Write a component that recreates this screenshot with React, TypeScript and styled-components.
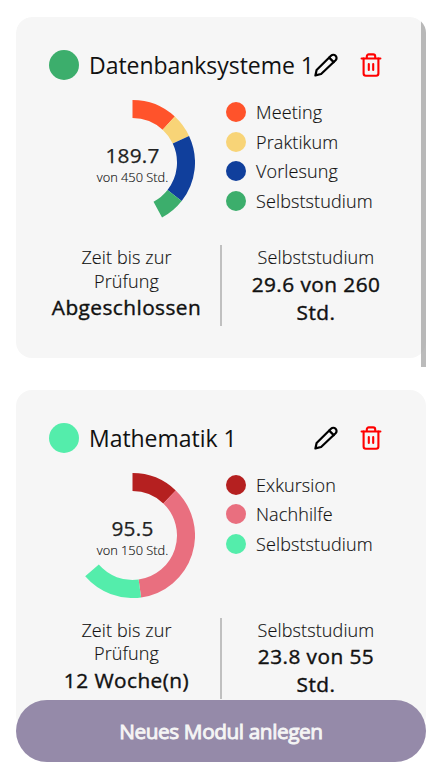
import React from "react";
import styled, { createGlobalStyle } from "styled-components";

const GlobalStyle = createGlobalStyle`
  * { box-sizing: border-box; }
  html, body { margin: 0; padding: 0; background: #fff; overflow: hidden; }
  body { font-family: "Open Sans", sans-serif; color: #111; }
`;

const Page = styled.div`
  display: flex;
  flex-direction: column;
  position: relative;
  height: 774px;
  padding: 17px 16px 12px;
  background: #fff;
`;

const ModuleList = styled.main`
  position: relative;
  flex: 1;
  min-height: 0;
  display: flex;
  flex-direction: column;
  gap: 31.3px;
  overflow: hidden;
  border-radius: 16px 16px 31px 31px;
`;

const ScrollThumb = styled.div`
  position: absolute;
  top: 0;
  right: 0;
  width: 5px;
  height: 350px;
  background: rgba(155, 155, 155, 0.68);
`;

const Card = styled.article`
  flex: none;
  height: 341.3px;
  padding: 33px 16px 0;
  border-radius: 16px;
  background: #f6f6f6;
`;

const CardHeader = styled.header`
  display: flex;
  align-items: center;
  height: 30px;
  padding-left: 17px;
`;

const Dot = styled.span<{ $color: string; $size: number }>`
  flex: none;
  width: ${(p) => p.$size}px;
  height: ${(p) => p.$size}px;
  border-radius: 50%;
  background: ${(p) => p.$color};
`;

const Title = styled.h2`
  margin: 0 0 0 10px;
  width: 224px;
  font-size: 23px;
  font-weight: 400;
  line-height: 30px;
  letter-spacing: -0.04px;
  white-space: nowrap;
`;

const IconButton = styled.button`
  flex: none;
  display: flex;
  width: 26px;
  height: 26px;
  padding: 0;
  border: 0;
  background: none;
  color: ${(p) => p.color};

  & + & {
    margin-left: 20px;
  }
`;

const Overview = styled.div`
  display: flex;
  margin-top: 20px;
  height: 125px;
`;

const ChartBox = styled.div`
  display: grid;
  place-items: center;
  width: 125px;
  height: 125px;
  margin-left: 38px;

  > * {
    grid-area: 1 / 1;
  }
`;

const ChartLabel = styled.div`
  display: flex;
  flex-direction: column;
  align-items: center;
  padding-top: 2px;
  white-space: nowrap;
`;

const ChartValue = styled.span`
  font-size: 20.8px;
  line-height: 28px;
  letter-spacing: 0.2px;
  color: #222;
  -webkit-text-stroke: 0.25px #222;
`;

const ChartTotal = styled.span`
  font-size: 12.8px;
  line-height: 17px;
  font-weight: 300;
  -webkit-text-stroke: 0.15px #111;
`;

const Legend = styled.ul`
  display: flex;
  flex-direction: column;
  gap: 5.7px;
  margin: 0 0 0 31px;
  padding: 0;
  list-style: none;
`;

const LegendItem = styled.li`
  display: flex;
  align-items: center;
  gap: 10px;
  height: 24px;
  font-size: 18px;
  font-weight: 300;
  letter-spacing: 0.12px;
  -webkit-text-stroke: 0.15px #111;
`;

const Stats = styled.div`
  display: grid;
  grid-template-columns: 188px 190px;
  height: 81px;
  margin-top: 20px;
`;

const Stat = styled.section`
  display: flex;
  flex-direction: column;
  align-items: center;
  text-align: center;
  padding: 1px 15px 0 16px;

  & + & {
    border-left: 2px solid #c0c0c0;
    padding: 1px 16px 0;
  }
`;

const StatLabel = styled.span`
  font-size: 18px;
  line-height: 23.7px;
  font-weight: 300;
  letter-spacing: 0.12px;
  -webkit-text-stroke: 0.15px #111;
`;

const StatValue = styled.strong`
  margin-top: -0.2px;
  font-size: 20.8px;
  line-height: 28.3px;
  font-weight: 400;
  letter-spacing: 0.45px;
  -webkit-text-stroke: 0.4px #111;
`;

const CreateButton = styled.button`
  position: absolute;
  left: 16px;
  right: 16px;
  bottom: 12px;
  height: 62.4px;
  padding: 1px 0 0;
  border: 0;
  border-radius: 31.2px;
  background: #958aa9;
  color: #f5f5f5;
  font: 400 20.8px "Open Sans", sans-serif;
  letter-spacing: -0.42px;
  -webkit-text-stroke: 0.9px #f5f5f5;
`;

interface Segment {
  label: string;
  color: string;
  end: number;
}

interface Module {
  name: string;
  color: string;
  done: string;
  total: string;
  segments: Segment[];
  exam: string;
  study: string;
}

const modules: Module[] = [
  {
    name: "Datenbanksysteme 1",
    color: "#3cae6c",
    done: "189.7",
    total: "von 450 Std.",
    segments: [
      { label: "Meeting", color: "#ff532b", end: 42.6 },
      { label: "Praktikum", color: "#f8d477", end: 64.8 },
      { label: "Vorlesung", color: "#103f9c", end: 128.1 },
      { label: "Selbststudium", color: "#3cae6c", end: 151.8 },
    ],
    exam: "Abgeschlossen",
    study: "29.6 von 260 Std.",
  },
  {
    name: "Mathematik 1",
    color: "#54edab",
    done: "95.5",
    total: "von 150 Std.",
    segments: [
      { label: "Exkursion", color: "#b52020", end: 43.8 },
      { label: "Nachhilfe", color: "#e96f7f", end: 172.1 },
      { label: "Selbststudium", color: "#54edab", end: 229.2 },
    ],
    exam: "12 Woche(n)",
    study: "23.8 von 55 Std.",
  },
];

const CENTER = 62.5;
const OUTER = 62.5;
const INNER = 44.5;

function point(radius: number, degrees: number) {
  const a = (degrees * Math.PI) / 180;
  return `${CENTER + radius * Math.sin(a)} ${CENTER - radius * Math.cos(a)}`;
}

function ringPath(start: number, end: number) {
  return `M${point(OUTER, start)}A${OUTER} ${OUTER} 0 0 1 ${point(OUTER, end)}L${point(INNER, end)}A${INNER} ${INNER} 0 0 0 ${point(INNER, start)}Z`;
}

function Donut({ segments }: { segments: Segment[] }) {
  return (
    <svg width="125" height="125" viewBox="0 0 125 125">
      {segments.map((s, i) => (
        <path
          key={s.label}
          d={ringPath(i ? segments[i - 1].end : 0, s.end)}
          fill={s.color}
        />
      ))}
    </svg>
  );
}

function PencilIcon() {
  return (
    <svg width="26" height="26" viewBox="0 0 26 26" fill="none" stroke="currentColor" strokeWidth="2.2" strokeLinecap="round" strokeLinejoin="round">
      <path d="M2.4 23.4 3.6 18 18 3.7a3.25 3.25 0 0 1 4.6 4.6L8.1 22Z" />
      <path d="m16.2 5.6 4.5 4.5" />
    </svg>
  );
}

function TrashIcon() {
  return (
    <svg width="26" height="26" viewBox="0 0 26 26" fill="none" stroke="currentColor" strokeWidth="2.1" strokeLinecap="round" strokeLinejoin="round">
      <path d="M2.6 6.5h18.8M7.8 6.5V4.4a2 2 0 0 1 2-2h4.4a2 2 0 0 1 2 2v2.1" />
      <path d="M4.6 6.5v15a2.2 2.2 0 0 0 2.2 2.2h10.4a2.2 2.2 0 0 0 2.2-2.2v-15" />
      <path d="M9.8 12v6M14.2 12v6" />
    </svg>
  );
}

function ModuleCard({ module }: { module: Module }) {
  return (
    <Card>
      <CardHeader>
        <Dot $color={module.color} $size={30} />
        <Title>{module.name}</Title>
        <IconButton color="#000" aria-label="Bearbeiten">
          <PencilIcon />
        </IconButton>
        <IconButton color="#ff0000" aria-label="Löschen">
          <TrashIcon />
        </IconButton>
      </CardHeader>
      <Overview>
        <ChartBox>
          <Donut segments={module.segments} />
          <ChartLabel>
            <ChartValue>{module.done}</ChartValue>
            <ChartTotal>{module.total}</ChartTotal>
          </ChartLabel>
        </ChartBox>
        <Legend>
          {module.segments.map((s) => (
            <LegendItem key={s.label}>
              <Dot $color={s.color} $size={20} />
              {s.label}
            </LegendItem>
          ))}
        </Legend>
      </Overview>
      <Stats>
        <Stat>
          <StatLabel>Zeit bis zur Prüfung</StatLabel>
          <StatValue>{module.exam}</StatValue>
        </Stat>
        <Stat>
          <StatLabel>Selbststudium</StatLabel>
          <StatValue>{module.study}</StatValue>
        </Stat>
      </Stats>
    </Card>
  );
}

export default function App() {
  return (
    <>
      <GlobalStyle />
      <Page>
        <ModuleList>
          {modules.map((m) => (
            <ModuleCard key={m.name} module={m} />
          ))}
          <ScrollThumb />
        </ModuleList>
        <CreateButton>Neues Modul anlegen</CreateButton>
      </Page>
    </>
  );
}
